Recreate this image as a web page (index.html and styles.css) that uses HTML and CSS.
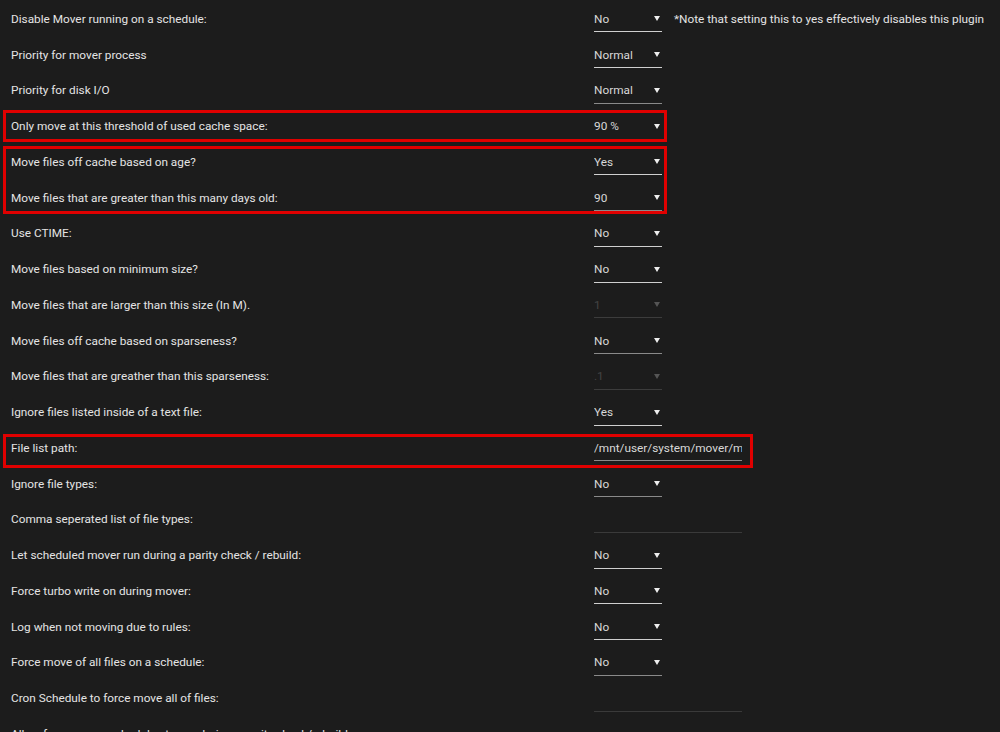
FILE: index.html
```html
<!DOCTYPE html>
<html lang="en">
<head>
  <meta charset="UTF-8" />
  <title>Mover Tuning</title>
  <link rel="stylesheet" href="styles.css">
</head>
<body>
  <form class="settings">
    <div class="row">
      <label>Disable Mover running on a schedule:</label>
      <span class="dropdown"><select><option>No</option><option>Yes</option></select></span>
      <span class="note">*Note that setting this to yes effectively disables this plugin</span>
    </div>
    <div class="row">
      <label>Priority for mover process</label>
      <span class="dropdown"><select><option>Normal</option><option>Low</option></select></span>
    </div>
    <div class="row">
      <label>Priority for disk I/O</label>
      <span class="dropdown dim"><select><option>Normal</option><option>Low</option></select></span>
    </div>

    <div class="group mark">
      <div class="row">
        <label>Only move at this threshold of used cache space:</label>
        <span class="dropdown dim"><select><option>90 %</option></select></span>
      </div>
    </div>

    <div class="group mark">
      <div class="row">
        <label>Move files off cache based on age?</label>
        <span class="dropdown"><select><option>Yes</option><option>No</option></select></span>
      </div>
      <div class="row">
        <label>Move files that are greater than this many days old:</label>
        <span class="dropdown dim"><select><option>90</option></select></span>
      </div>
    </div>

    <div class="row">
      <label>Use CTIME:</label>
      <span class="dropdown"><select><option>No</option><option>Yes</option></select></span>
    </div>
    <div class="row">
      <label>Move files based on minimum size?</label>
      <span class="dropdown"><select><option>No</option><option>Yes</option></select></span>
    </div>
    <div class="row">
      <label>Move files that are larger than this size (In M).</label>
      <span class="dropdown"><select disabled><option>1</option></select></span>
    </div>
    <div class="row">
      <label>Move files off cache based on sparseness?</label>
      <span class="dropdown dim"><select><option>No</option><option>Yes</option></select></span>
    </div>
    <div class="row">
      <label>Move files that are greather than this sparseness:</label>
      <span class="dropdown"><select disabled><option>.1</option></select></span>
    </div>
    <div class="row">
      <label>Ignore files listed inside of a text file:</label>
      <span class="dropdown"><select><option>Yes</option><option>No</option></select></span>
    </div>

    <div class="group mark wide">
      <div class="row">
        <label>File list path:</label>
        <input type="text" class="field filled" value="/mnt/user/system/mover/mover_ignore.txt">
      </div>
    </div>

    <div class="row">
      <label>Ignore file types:</label>
      <span class="dropdown dim"><select><option>No</option><option>Yes</option></select></span>
    </div>
    <div class="row">
      <label>Comma seperated list of file types:</label>
      <input type="text" class="field">
    </div>
    <div class="row">
      <label>Let scheduled mover run during a parity check / rebuild:</label>
      <span class="dropdown"><select><option>No</option><option>Yes</option></select></span>
    </div>
    <div class="row">
      <label>Force turbo write on during mover:</label>
      <span class="dropdown"><select><option>No</option><option>Yes</option></select></span>
    </div>
    <div class="row">
      <label>Log when not moving due to rules:</label>
      <span class="dropdown"><select><option>No</option><option>Yes</option></select></span>
    </div>
    <div class="row">
      <label>Force move of all files on a schedule:</label>
      <span class="dropdown dim"><select><option>No</option><option>Yes</option></select></span>
    </div>
    <div class="row">
      <label>Cron Schedule to force move all of files:</label>
      <input type="text" class="field">
    </div>
    <div class="row">
      <label>Allow force mover schedules to run during a parity check/rebuild:</label>
      <input type="text" class="field">
    </div>
  </form>
</body>
</html>
```

FILE: styles.css
```css
html {
  overflow: hidden;
}
body {
  margin: 0;
  background-color: #1c1c1c;
  color: #e4e4e4;
  font-family: Roboto, "Liberation Sans", sans-serif;
  font-size: 11.8px;
}
.settings {
  padding-top: 1px;
}
.row {
  display: flex;
  align-items: center;
  height: 35.75px;
  padding-left: 11px;
  white-space: nowrap;
}
.row label {
  width: 583px;
  flex-shrink: 0;
}

/* dropdowns: plain text with a small triangle and an underline */
.dropdown {
  position: relative;
  display: inline-block;
  flex-shrink: 0;
  width: 68px;
  height: 25px;
  margin-top: 1px;
  border-bottom: 1px solid #cfcfcf;
}
.dropdown.dim {
  border-bottom-color: #8a8a8a;
}
.dropdown select {
  appearance: none;
  -webkit-appearance: none;
  width: 100%;
  height: 100%;
  padding: 0;
  border: none;
  background: transparent;
  color: #d8d8d8;
  font: inherit;
  outline: none;
}
.dropdown::after {
  content: "";
  position: absolute;
  right: 2px;
  top: 10px;
  border-left: 3px solid transparent;
  border-right: 3px solid transparent;
  border-top: 5px solid #eee;
  pointer-events: none;
}
.dropdown:has(select:disabled) {
  border-bottom-color: #3c3c3c;
}
.dropdown:has(select:disabled)::after {
  border-top-color: #555;
}
.dropdown select:disabled {
  color: #555;
}

.field {
  width: 148px;
  height: 25px;
  margin-top: 1px;
  padding: 0;
  border: none;
  border-bottom: 1px solid #3a3a3a;
  background: transparent;
  color: #d8d8d8;
  font: inherit;
  outline: none;
}
.field.filled {
  border-bottom-color: #8a8a8a;
}

.note {
  margin-left: 12px;
  color: #e4e4e4;
}

/* red highlight frames round groups of settings */
.mark {
  position: relative;
}
.mark::after {
  content: "";
  position: absolute;
  left: 3px;
  top: 2px;
  bottom: 2px;
  width: 658px;
  border: 3px solid #e00000;
  pointer-events: none;
}
.mark.wide::after {
  width: 744px;
  top: 4px;
  bottom: -2px;
}
```
